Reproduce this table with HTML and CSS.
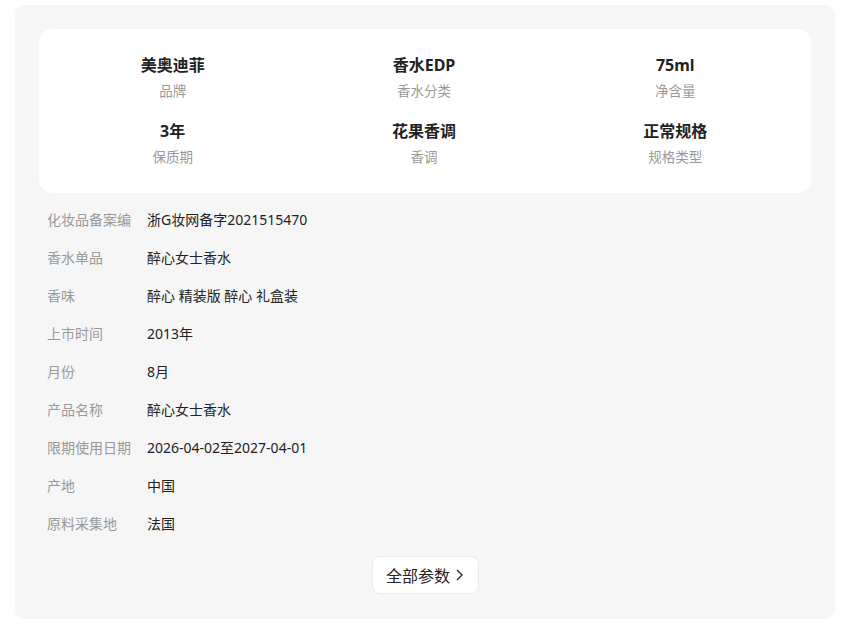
FILE: index.html
```html
<!DOCTYPE html>
<html lang="zh-CN">
<head>
  <meta charset="UTF-8" />
  <title>商品参数</title>
  <link rel="stylesheet" href="styles.css">
</head>
<body>

  <div class="panel">
    <div class="summary">
      <div class="cell"><div class="val">美奥迪菲</div><div class="key">品牌</div></div>
      <div class="cell"><div class="val">香水EDP</div><div class="key">香水分类</div></div>
      <div class="cell"><div class="val">75ml</div><div class="key">净含量</div></div>
      <div class="cell"><div class="val">3年</div><div class="key">保质期</div></div>
      <div class="cell"><div class="val">花果香调</div><div class="key">香调</div></div>
      <div class="cell"><div class="val">正常规格</div><div class="key">规格类型</div></div>
    </div>

    <ul class="params">
      <li><span class="name" title="化妆品备案编号">化妆品备案编</span><span class="text">浙G妆网备字2021515470</span></li>
      <li><span class="name">香水单品</span><span class="text">醉心女士香水</span></li>
      <li><span class="name">香味</span><span class="text">醉心 精装版 醉心 礼盒装</span></li>
      <li><span class="name">上市时间</span><span class="text">2013年</span></li>
      <li><span class="name">月份</span><span class="text">8月</span></li>
      <li><span class="name">产品名称</span><span class="text">醉心女士香水</span></li>
      <li><span class="name">限期使用日期</span><span class="text">2026-04-02至2027-04-01</span></li>
      <li><span class="name">产地</span><span class="text">中国</span></li>
      <li><span class="name">原料采集地</span><span class="text">法国</span></li>
    </ul>

    <div class="more">
      <button class="more-btn">全部参数
        <svg width="9" height="14" viewBox="0 0 9 14"><path d="M2 2l5 5-5 5" fill="none" stroke="#222" stroke-width="1.3"/></svg>
      </button>
    </div>
  </div>

</body>
</html>
```

FILE: styles.css
```css
body {
  font-family: "Noto Sans", "Noto Sans CJK SC", sans-serif;
  background: #fff;
  margin: 5px 0 0 15px;
  color: #222;
}
.panel {
  width: 772px;
  background: #f6f6f6;
  border-radius: 10px;
  padding: 24px 24px 25px;
}
.summary {
  background: #fff;
  border-radius: 14px;
  padding: 25px 10px 26px 8px;
  display: grid;
  grid-template-columns: repeat(3, 1fr);
  row-gap: 19px;
  text-align: center;
}
.val {
  font-size: 16px;
  font-weight: bold;
  line-height: 22px;
}
.key {
  font-size: 13.5px;
  line-height: 20px;
  color: #999;
  margin-top: 5px;
}
.params {
  list-style: none;
  margin: 8px 0 0;
  padding: 0 0 0 8px;
}
.params li {
  display: flex;
  font-size: 14px;
  line-height: 38px;
}
.name {
  width: 100px;
  flex-shrink: 0;
  color: #999;
  white-space: nowrap;
}
.text {
  color: #222;
}
.more {
  display: flex;
  justify-content: center;
  margin-top: 13px;
}
.more-btn {
  font-family: inherit;
  font-size: 16px;
  color: #222;
  background: #fff;
  border: 1px solid #eaeaea;
  border-radius: 8px;
  width: 107px;
  height: 38px;
  display: flex;
  align-items: center;
  justify-content: center;
  gap: 5px;
  padding: 0;
}
```
